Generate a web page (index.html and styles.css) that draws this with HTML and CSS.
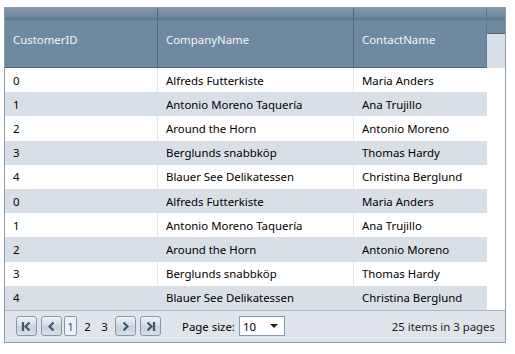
FILE: index.html
```html
<html>
  <head>
    <title>Customers grid</title>
    <link rel="stylesheet" href="styles.css">
  </head>
  <body>
    <div class="grid">
      <div class="head">
        <div class="hcell c1">CustomerID</div>
        <div class="hcell c2">CompanyName</div>
        <div class="hcell c3">ContactName</div>
        <div class="hfill"><div class="hfill-top"></div></div>
      </div>
      <div class="rows">
        <div class="row"><span class="c1">0</span><span class="c2">Alfreds Futterkiste</span><span class="c3">Maria Anders</span></div>
        <div class="row alt"><span class="c1">1</span><span class="c2">Antonio Moreno Taquería</span><span class="c3">Ana Trujillo</span></div>
        <div class="row"><span class="c1">2</span><span class="c2">Around the Horn</span><span class="c3">Antonio Moreno</span></div>
        <div class="row alt"><span class="c1">3</span><span class="c2">Berglunds snabbköp</span><span class="c3">Thomas Hardy</span></div>
        <div class="row"><span class="c1">4</span><span class="c2">Blauer See Delikatessen</span><span class="c3">Christina Berglund</span></div>
        <div class="row alt"><span class="c1">0</span><span class="c2">Alfreds Futterkiste</span><span class="c3">Maria Anders</span></div>
        <div class="row"><span class="c1">1</span><span class="c2">Antonio Moreno Taquería</span><span class="c3">Ana Trujillo</span></div>
        <div class="row alt"><span class="c1">2</span><span class="c2">Around the Horn</span><span class="c3">Antonio Moreno</span></div>
        <div class="row"><span class="c1">3</span><span class="c2">Berglunds snabbköp</span><span class="c3">Thomas Hardy</span></div>
        <div class="row alt"><span class="c1">4</span><span class="c2">Blauer See Delikatessen</span><span class="c3">Christina Berglund</span></div>
      </div>
      <div class="pager">
        <div class="nav">
          <span class="btn"><svg width="11" height="11" viewBox="0 0 11 11"><path d="M2 1v9" stroke="#3d5873" stroke-width="2.2"/><path d="M8.5 1.5L4.5 5.5l4 4" fill="none" stroke="#3d5873" stroke-width="2.2"/></svg></span>
          <span class="btn"><svg width="11" height="11" viewBox="0 0 11 11"><path d="M7.5 1.5L3.5 5.5l4 4" fill="none" stroke="#3d5873" stroke-width="2.2"/></svg></span>
          <span class="num cur">1</span>
          <span class="num">2</span>
          <span class="num">3</span>
          <span class="btn"><svg width="11" height="11" viewBox="0 0 11 11"><path d="M3.5 1.5l4 4-4 4" fill="none" stroke="#3d5873" stroke-width="2.2"/></svg></span>
          <span class="btn"><svg width="11" height="11" viewBox="0 0 11 11"><path d="M2.5 1.5l4 4-4 4" fill="none" stroke="#3d5873" stroke-width="2.2"/><path d="M9 1v9" stroke="#3d5873" stroke-width="2.2"/></svg></span>
        </div>
        <div class="size">
          <span>Page size:</span>
          <span class="select">10<svg width="8" height="4" viewBox="0 0 8 4"><path d="M0 0h8L4 4z" fill="#222"/></svg></span>
        </div>
        <div class="info">25 items in 3 pages</div>
      </div>
    </div>
  </body>
</html>
```
FILE: styles.css
```css
body {
  margin: 0;
  padding: 7px 0 0 4px;
  background: #fff;
  font-family: "Noto Sans", sans-serif;
  font-size: 11.4px;
  color: #000;
}
.grid {
  width: 500px;
  border: 1px solid #8a9bb0;
}
.head {
  display: flex;
  height: 60px;
}
.hcell {
  display: flex;
  align-items: center;
  padding: 4px 0 0 8px;
  box-sizing: border-box;
  color: #f2f5f8;
  background: linear-gradient(#8398ad 0, #6e879e 9px, #5a7690 11px, #6f89a0 13px, #6f89a0 100%);
  border-right: 1px solid #4f6882;
  border-bottom: 1px solid #4f6882;
}
.c1 { width: 153px; }
.c2 { width: 196px; }
.c3 { width: 133px; }
.hcell.c3 { border-right: 1px solid #5d7790; }
.hfill {
  flex: 1;
  background: #d9dfe6;
}
.hfill-top {
  height: 25px;
  background: linear-gradient(#8398ad 0, #6e879e 9px, #5a7690 11px, #6f89a0 13px, #6f89a0 100%);
  border-bottom: 1px solid #4f6882;
}
.rows {
  padding-right: 18px;
}
.row {
  display: flex;
  height: 24.2px;
  align-items: center;
}
.row span {
  box-sizing: border-box;
  padding-left: 8px;
  height: 100%;
  display: flex;
  align-items: center;
  border-right: 1px solid #e3e8ed;
}
.row span.c3 { border-right: none; }
.row.alt { background: #d9dfe6; }
.row.alt span { border-right-color: #d9dfe6; }
.pager {
  display: flex;
  align-items: center;
  height: 31px;
  border-top: 1px solid #a9b6c4;
  background: #dfe5eb;
  padding: 0 10px 0 11px;
}
.nav {
  display: flex;
  align-items: center;
}
.btn {
  display: flex;
  align-items: center;
  justify-content: center;
  width: 19px;
  height: 18px;
  border: 1px solid #8797aa;
  border-radius: 3px;
  background: linear-gradient(#eef2f6, #d3dbe3 50%, #c6d0db 51%, #d8e0e8);
  margin-right: 4px;
}
.num {
  display: flex;
  align-items: center;
  justify-content: center;
  width: 11px;
  height: 18px;
  margin-right: 4px;
  border: 1px solid transparent;
}
.num.cur {
  color: #2b56a0;
  border: 1px solid #8797aa;
  border-radius: 2px;
  background: #eef2f6;
  margin-left: -2px;
}
.size {
  display: flex;
  align-items: center;
  margin-left: 17px;
}
.select {
  display: flex;
  align-items: center;
  justify-content: space-between;
  box-sizing: border-box;
  width: 46px;
  height: 20px;
  margin-left: 4px;
  padding: 0 6px 0 3px;
  background: #fff;
  border: 1px solid #7f9db9;
}
.info {
  margin-left: auto;
  color: #222;
}
```
